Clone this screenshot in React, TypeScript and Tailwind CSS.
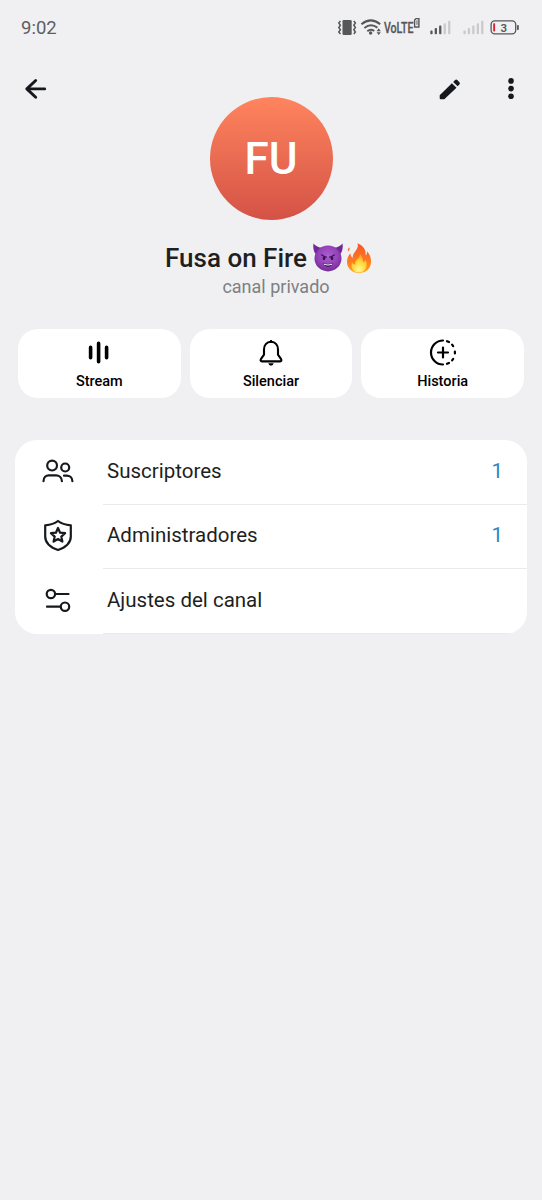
import type { ReactNode } from "react"

interface Action {
    label: string
    icon: ReactNode
}

interface Row {
    label: string
    count?: number
    icon: ReactNode
}

function StatusIcons() {
    return (
        <svg width="200" height="40" viewBox="330 8 200 40" fill="#56575a">
            <rect x="342.5" y="20" width="9.2" height="15" rx="1.2" />
            <path d="M340.4 21l-1.6 2 1.6 2.2-1.6 2.3 1.6 2.3-1.6 2.2 1.6 2M353.8 21l1.6 2-1.6 2.2 1.6 2.3-1.6 2.3 1.6 2.2-1.6 2" fill="none" stroke="#56575a" strokeWidth="1.5" />
            <path d="M361.4 24.2Q370.8 16.6 380.2 24.2M364.4 28Q370.8 22.8 377.4 27.6M367.3 31.2Q370.8 28.4 374.2 31" fill="none" stroke="#56575a" strokeWidth="2" />
            <circle cx="370.6" cy="33" r="1.7" />
            <path d="M376.6 31.2l2.1-2.9 2.1 2.9zM376.6 32.2l2.1 2.9 2.1-2.9z" />
            <text x="384" y="32.6" fontSize="15" fontWeight="500" stroke="#56575a" strokeWidth=".3" textLength="29.5" lengthAdjust="spacingAndGlyphs" className="font-['Roboto',sans-serif]">VoLTE</text>
            <path d="M416 18.600h2.900v8.400h-4.300v-7z" fill="none" stroke="#56575a" strokeWidth="1.4" />
            <path d="M417 20.300v4.600" stroke="#56575a" strokeWidth="1" />
            <rect x="430.3" y="30.6" width="2.3" height="3.6" rx=".8" />
            <rect x="434.7" y="28" width="2.3" height="6.2" rx=".8" />
            <rect x="439.1" y="25.6" width="2.3" height="8.6" rx=".8" />
            <g fill="#c9cacc">
                <rect x="443.6" y="23.2" width="2.3" height="11" rx=".8" />
                <rect x="448.1" y="20.8" width="2.3" height="13.4" rx=".8" />
                <rect x="463.4" y="30.6" width="2.3" height="3.6" rx=".8" />
                <rect x="467.8" y="28" width="2.3" height="6.2" rx=".8" />
                <rect x="472.2" y="25.6" width="2.3" height="8.6" rx=".8" />
                <rect x="476.7" y="23.2" width="2.3" height="11" rx=".8" />
                <rect x="481.1" y="20.8" width="2.3" height="13.4" rx=".8" />
            </g>
            <rect x="491.1" y="20.8" width="24.6" height="13" rx="3.6" fill="none" stroke="#56575a" strokeWidth="1.3" />
            <rect x="517" y="25" width="1.8" height="5" rx=".7" />
            <rect x="493.2" y="23.2" width="1.9" height="8.2" rx=".6" fill="#d8232f" />
            <text x="503.8" y="31.5" fontSize="11.5" fontWeight="600" textAnchor="middle" className="font-['Roboto',sans-serif]">3</text>
        </svg>
    )
}

function DevilEmoji() {
    return (
        <svg width="30" height="30" viewBox="0 0 30 30">
            <defs>
                <radialGradient id="devil" cx=".5" cy=".4" r=".6">
                    <stop offset="0" stopColor="#ab5fd0" />
                    <stop offset=".6" stopColor="#9443b8" />
                    <stop offset="1" stopColor="#732d98" />
                </radialGradient>
            </defs>
            <path d="M.5.5C-.2 4.500.6 8.500 3 11.500L9 5C6 4.500 2.500 3.200.5.5zM29.500.5c.7 4-.1 8-2.500 11L21 5c3-.5 6.500-1.800 8.500-4.500z" fill="#702894" />
            <ellipse cx="15" cy="15.500" rx="13.500" ry="12.900" fill="url(#devil)" />
            <path d="M8.500 11.800q2.600 2.200 4.900 2.300M21.500 11.800q-2.600 2.200-4.900 2.300" fill="none" stroke="#3d1259" strokeWidth="1.200" strokeLinecap="round" />
            <ellipse cx="11" cy="15.400" rx="1.300" ry="1.700" fill="#35104d" />
            <ellipse cx="19" cy="15.400" rx="1.300" ry="1.700" fill="#35104d" />
            <path d="M9.600 19.800Q15 22.300 20.400 19.800 18.700 23.900 15 23.900t-5.400-4.100z" fill="#3d1259" />
            <path d="M10.500 20.400Q15 22.400 19.500 20.400l-.6 1.300Q15 23.300 11.100 21.700z" fill="#fff" />
        </svg>
    )
}

function FireEmoji() {
    return (
        <svg width="30" height="30" viewBox="0 0 30 30">
            <defs>
                <linearGradient id="flame" x1="0" y1="0" x2="0" y2="1">
                    <stop offset="0" stopColor="#f4572a" />
                    <stop offset=".6" stopColor="#ff7a21" />
                    <stop offset="1" stopColor="#ffa81f" />
                </linearGradient>
                <radialGradient id="core" cx=".5" cy=".85" r=".8">
                    <stop offset="0" stopColor="#fff79a" />
                    <stop offset=".5" stopColor="#ffdc3e" />
                    <stop offset="1" stopColor="#ff9d20" />
                </radialGradient>
            </defs>
            <path d="M13.500.3C20 3 22.300 7.500 21.500 12.500c1.300-.8 1.700-2.400 1.300-4.300C26 11 27.300 15.500 27 19.500 26.600 26 21.500 30 15 30S3.200 26 3 19.300C2.900 15.500 4.400 12.800 6.300 10.300c.3 2.200 1 3.800 2.300 4.600C8.500 9 15.500 6.500 13.500.3z" fill="url(#flame)" />
            <path d="M3.900 8.500c-.5-2.100.4-3.200 1.700-3.900.3 1.500-.1 2.900-1.700 3.900z" fill="#ff6a2a" />
            <path d="M15.800 11c3.500 3 2.400 5.400 3.600 8 1.300-.4 1.900-1.600 2.100-2.600 3.400 6-.3 13.100-6.500 13.100-5.800 0-9-5-7-10.500.9 1.800 1.900 2.500 3.200 2.600-.7-5 4.700-5.700 4.600-10.600z" fill="url(#core)" />
        </svg>
    )
}

const actions: Action[] = [
    {
        label: "Stream",
        icon: (
            <svg width="28" height="28" viewBox="0 0 28 28" stroke="#000" strokeWidth="3.600" strokeLinecap="round">
                <path d="M5.600 9.400v10.400M13.600 5.400v18.400M21.600 9.400v10.400" />
            </svg>
        ),
    },
    {
        label: "Silenciar",
        icon: (
            <svg width="28" height="28" viewBox="0 0 28 28" fill="none" stroke="#000" strokeWidth="2.100" strokeLinejoin="round">
                <path d="M14 3.700c-4.500.3-7 3.600-7 7.800v5.200L3.900 21.200c-.7 1.100-.3 2.200 1 2.200h18.200c1.300 0 1.700-1.100 1-2.200L21 16.700v-5.200c0-4.200-2.500-7.500-7-7.800z" />
                <path d="M12.500 3.600q1.500-3 3 0z" fill="#000" strokeWidth="1" />
                <path d="M11.300 25.300h5.400c-.5 1.500-1.500 2.300-2.700 2.300s-2.200-.8-2.700-2.300z" fill="#000" stroke="none" />
            </svg>
        ),
    },
    {
        label: "Historia",
        icon: (
            <svg width="28" height="28" viewBox="0 0 28 28" fill="none" stroke="#000" strokeWidth="2.200" strokeLinecap="round">
                <path d="M14 2.500a12 12 0 0 0 0 24M14 9.500v10M9 14.500h10" />
                <path d="M18 3.200l2 .9M23.100 6.700l1.100 1.500M25.900 13.500v2M24.200 20.800l-1.100 1.500M20 24.900l-2 .9" />
            </svg>
        ),
    },
]

const rows: Row[] = [
    {
        label: "Suscriptores",
        count: 1,
        icon: (
            <svg width="34" height="34" viewBox="41 454 34 34" fill="none" stroke="#16191d" strokeWidth="2.200" strokeLinecap="round">
                <circle cx="52.100" cy="465.600" r="4.900" />
                <circle cx="65.200" cy="467.500" r="4" />
                <path d="M43.500 481.200c0-4 2.600-5.800 5.200-5.800h7.400c2.600 0 5.800 1.800 5.800 5.800M64 475.700h2.600c3.200 0 5.800 2 5.800 5.500" />
            </svg>
        ),
    },
    {
        label: "Administradores",
        count: 1,
        icon: (
            <svg width="34" height="34" viewBox="41 519 34 34" fill="none" stroke="#16191d" strokeWidth="2.200" strokeLinejoin="round">
                <path d="M58 521c3.200 2.600 7.400 3.900 12.800 4.300v11.200c0 6.500-5.200 10.900-12.800 13.500-7.600-2.600-12.800-7-12.800-13.500v-11.200c5.400-.4 9.600-1.700 12.800-4.300z" />
                <path d="M58 528l2.100 4.700 5 .5-3.800 3.400 1.100 5-4.400-2.600-4.400 2.600 1.100-5-3.800-3.400 5-.5z" />
            </svg>
        ),
    },
    {
        label: "Ajustes del canal",
        icon: (
            <svg width="34" height="34" viewBox="41 583 34 34" fill="none" stroke="#16191d" strokeWidth="2.200" strokeLinecap="round">
                <circle cx="50.900" cy="594" r="4.200" />
                <path d="M55.500 594h13M47 606.700h13.300" />
                <circle cx="65" cy="606.700" r="4.200" />
            </svg>
        ),
    },
]

export default function App() {
    return (
        <main className="min-h-screen w-full bg-[#f0f0f2] font-['Roboto',sans-serif] text-[#1d1f22]">
            <header className="flex h-[65px] items-start justify-between pt-2 pr-3 pl-[21px]">
                <p className="pt-1.5 text-[18.5px] leading-7 text-[#5d5e61]">9:02</p>
                <StatusIcons />
            </header>

            <nav className="flex h-12 items-center justify-between pr-[19px] pl-[23px]">
                <button aria-label="Volver">
                    <svg width="26" height="24" viewBox="23 77 26 24" fill="none" stroke="#16181d" strokeWidth="2.900" strokeLinecap="round" strokeLinejoin="round">
                        <path d="M35.700 80.500L26.800 88.900l8.900 8.400M27 88.900h17.700" />
                    </svg>
                </button>
                <div className="flex items-center gap-[37px]">
                    <button aria-label="Editar">
                        <svg width="24" height="24" viewBox="438 77 24 24" fill="#16181d">
                            <path d="M439.700 95.200l12.200-12 4.600 4.500-12.200 11.600h-3.600q-1 0-1-1zM453.200 82l1.900-1.900q1.100-1 2.200 0l2.100 2.100q1.100 1.100 0 2.200l-1.800 1.900z" />
                        </svg>
                    </button>
                    <button aria-label="Más">
                        <svg width="24" height="24" viewBox="499 77 24 24" fill="#16181d">
                            <circle cx="511" cy="80.900" r="2.800" />
                            <circle cx="511" cy="88.600" r="2.800" />
                            <circle cx="511" cy="96.300" r="2.800" />
                        </svg>
                    </button>
                </div>
            </nav>

            <section className="-mt-4 flex flex-col items-center">
                <div className="flex size-[123px] items-center justify-center rounded-full bg-linear-to-b from-[#ff845e] to-[#d45246]">
                    <span className="text-[44px] leading-none font-medium text-white">FU</span>
                </div>
                <div className="mt-[23px] flex h-[30px] items-center gap-px pr-[3px]">
                    <h1 className="mr-[5px] text-[26px] leading-[30px] font-medium whitespace-nowrap">Fusa on Fire</h1>
                    <DevilEmoji />
                    <FireEmoji />
                </div>
                <p className="mt-0.5 pl-[10px] text-[18px] leading-6 text-[#7d8083]">canal privado</p>
            </section>

            <section className="mt-[30px] grid grid-cols-3 gap-[9px] px-[18px] text-black">
                {actions.map((action) => (
                    <button key={action.label} className="flex h-[69px] flex-col items-center rounded-[20px] bg-white pt-[9px]">
                        {action.icon}
                        <span className="mt-1.5 text-[14.5px] leading-5 font-medium">{action.label}</span>
                    </button>
                ))}
            </section>

            <section className="mx-[15px] mt-[42px] overflow-hidden rounded-[22px] bg-white">
                {rows.map((row) => (
                    <div key={row.label} className="flex h-[64.500px] items-stretch pl-[26px]">
                        <div className="flex w-[62px] items-center pb-0.5">{row.icon}</div>
                        <div className="flex grow items-center justify-between border-b border-[#e9eaec] pr-6 pb-px pl-1 text-[20.5px]">
                            <span>{row.label}</span>
                            {row.count && <span className="text-[#3086bb]">{row.count}</span>}
                        </div>
                    </div>
                ))}
            </section>
        </main>
    )
}
